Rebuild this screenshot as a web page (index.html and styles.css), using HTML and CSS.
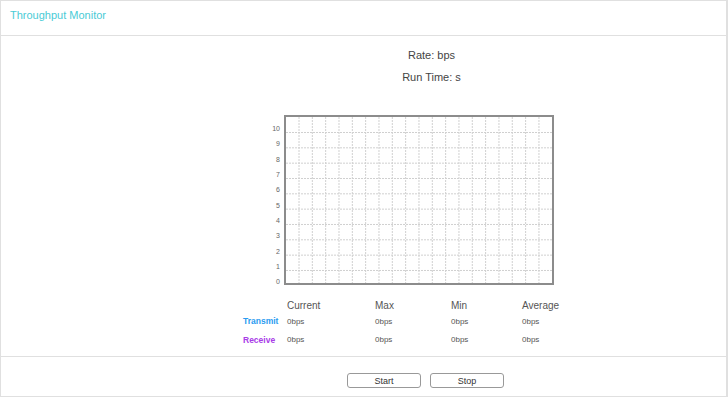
FILE: index.html
```html
<!DOCTYPE html>
<html>

<head>
    <title>Throughput Monitor</title>
    <link rel="stylesheet" href="styles.css">
</head>

<body>
    <div class="panel">
        <div class="panel-header">
            <span class="panel-title">Throughput Monitor</span>
        </div>

        <div class="panel-body">
            <div class="status">
                <div class="status-line">Rate: bps</div>
                <div class="status-line status-line--second">Run Time: s</div>
            </div>

            <div class="chart-wrap">
                <svg class="chart" id="chart" width="295" height="175" viewBox="0 0 295 175"></svg>
            </div>

            <div class="stats">
                <div></div>
                <div class="stats-head">Current</div>
                <div class="stats-head">Max</div>
                <div class="stats-head">Min</div>
                <div class="stats-head">Average</div>

                <div class="stats-label stats-label--tx">Transmit</div>
                <div class="stats-value">0bps</div>
                <div class="stats-value">0bps</div>
                <div class="stats-value">0bps</div>
                <div class="stats-value">0bps</div>

                <div class="stats-label stats-label--rx">Receive</div>
                <div class="stats-value">0bps</div>
                <div class="stats-value">0bps</div>
                <div class="stats-value">0bps</div>
                <div class="stats-value">0bps</div>
            </div>
        </div>

        <div class="panel-footer">
            <button class="btn" type="button">Start</button>
            <button class="btn" type="button">Stop</button>
        </div>
    </div>

    <script>
        //Draw the grid
        var svg = document.getElementById("chart");
        var html = "";
        var i, x, y;

        for (i = 0; i < 19; i++) {
            x = 37 + i * 13.33;
            html += '<line class="grid" x1="' + x + '" y1="5" x2="' + x + '" y2="171" />';
        }
        for (i = 0; i < 10; i++) {
            y = 20.5 + i * 15.33;
            html += '<line class="grid" x1="24" y1="' + y + '" x2="290" y2="' + y + '" />';
            html += '<text class="axis" x="18" y="' + (y - 1.5) + '">' + (10 - i) + '</text>';
        }
        html += '<text class="axis" x="18" y="171.5">0</text>';
        html += '<rect class="frame" x="23" y="4" width="268" height="168" />';
        svg.innerHTML = html;
    </script>
</body>

</html>
```

FILE: styles.css
```css
body {
    margin: 0;
    font-family: "Liberation Sans", Arial, sans-serif;
    color: #444;
    background: #fff;
}

.panel {
    width: 728px;
    height: 397px;
    box-sizing: border-box;
    border: 1px solid #e0e0e0;
    border-right-width: 2px;
    display: flex;
    flex-direction: column;
}

.panel-header {
    height: 34px;
    border-bottom: 1px solid #e0e0e0;
    padding-left: 9px;
}

.panel-title {
    display: block;
    line-height: 28px;
    font-size: 11px;
    color: #4acbd6;
}

.panel-body {
    height: 320px;
}

.status {
    padding-top: 12px;
    padding-left: 136px;
    text-align: center;
    font-size: 11px;
    color: #444;
}

.status-line {
    line-height: 14px;
}

.status-line--second {
    margin-top: 8px;
}

.chart-wrap {
    margin-top: 28px;
    padding-left: 261px;
    height: 175px;
}

.chart {
    display: block;
}

.chart .grid {
    stroke: #d0d0d0;
    stroke-width: 1;
    stroke-dasharray: 2 1;
}

.chart .frame {
    fill: none;
    stroke: #8c8c8c;
    stroke-width: 2;
}

.chart .axis {
    font-family: "Liberation Sans", Arial, sans-serif;
    font-size: 7px;
    fill: #666;
    text-anchor: end;
}

.stats {
    margin-top: 10px;
    margin-left: 242px;
    display: grid;
    grid-template-columns: 44px 88px 76px 71px 60px;
    grid-template-rows: 16px 16px 21px;
    align-items: center;
}

.stats-head {
    font-size: 10px;
    color: #555;
}

.stats-value {
    font-size: 8px;
    color: #555;
}

.stats-label {
    font-size: 8.5px;
    font-weight: bold;
}

.stats-label--tx {
    color: #2a9bf0;
}

.stats-label--rx {
    color: #a93ce8;
}

.panel-footer {
    flex: 1;
    border-top: 1px solid #e0e0e0;
    padding-top: 16px;
    padding-left: 346px;
    display: flex;
    align-items: flex-start;
    gap: 9px;
}

.btn {
    width: 74px;
    height: 15px;
    padding: 0;
    background: #fff;
    border: 1px solid #999;
    border-radius: 3px;
    font-family: "Liberation Sans", Arial, sans-serif;
    font-size: 9px;
    color: #333;
    cursor: pointer;
}

.btn:hover {
    background: #f2f2f2;
}
```
